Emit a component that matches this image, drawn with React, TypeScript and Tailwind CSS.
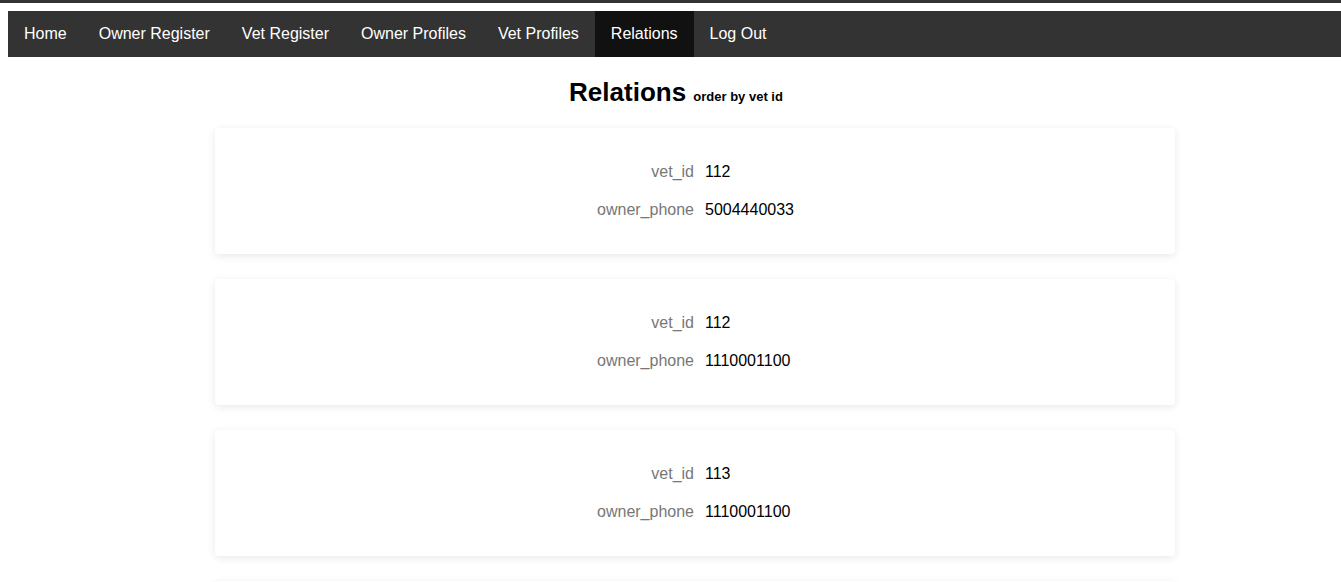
const navItems = ["Home", "Owner Register", "Vet Register", "Owner Profiles", "Vet Profiles", "Relations", "Log Out"]

const relations = [
    { vet_id: "112", owner_phone: "5004440033" },
    { vet_id: "112", owner_phone: "1110001100" },
    { vet_id: "113", owner_phone: "1110001100" },
    { vet_id: "114", owner_phone: "5004440033" },
]

export default function App() {
    return (
        <div className="min-h-screen bg-white font-['Liberation_Sans',Arial,sans-serif] text-black">
            <div className="h-[3px] bg-[#333]" />
            <nav className="ml-2 mt-2 flex bg-[#333]">
                {navItems.map(item => (
                    <a
                        key={item}
                        className={`px-4 py-[14px] text-[16px] leading-[18px] text-white ${
                            item === "Relations" ? "bg-[#111]" : ""
                        }`}
                    >
                        {item}
                    </a>
                ))}
            </nav>

            <div className="pl-2">
                <h2 className="ml-[3px] mt-5 text-center text-[26px] font-bold leading-[30px]">
                    Relations <small className="text-[13px] font-bold">order by vet id</small>
                </h2>

                <div className="ml-[207px] mt-4 flex w-[960px] flex-col gap-[25px]">
                    {relations.map((r, i) => (
                        <div
                            key={i}
                            className="rounded-[4px] bg-white py-[25px] shadow-[0_2px_8px_rgba(0,0,0,0.09)]"
                        >
                            <div className="grid grid-cols-[479px_1fr] gap-x-[11px] text-[16px]">
                                <div className="flex h-[38px] items-center justify-end text-[#777]">vet_id</div>
                                <div className="flex h-[38px] items-center">{r.vet_id}</div>
                                <div className="flex h-[38px] items-center justify-end text-[#777]">owner_phone</div>
                                <div className="flex h-[38px] items-center">{r.owner_phone}</div>
                            </div>
                        </div>
                    ))}
                </div>
            </div>
        </div>
    )
}
